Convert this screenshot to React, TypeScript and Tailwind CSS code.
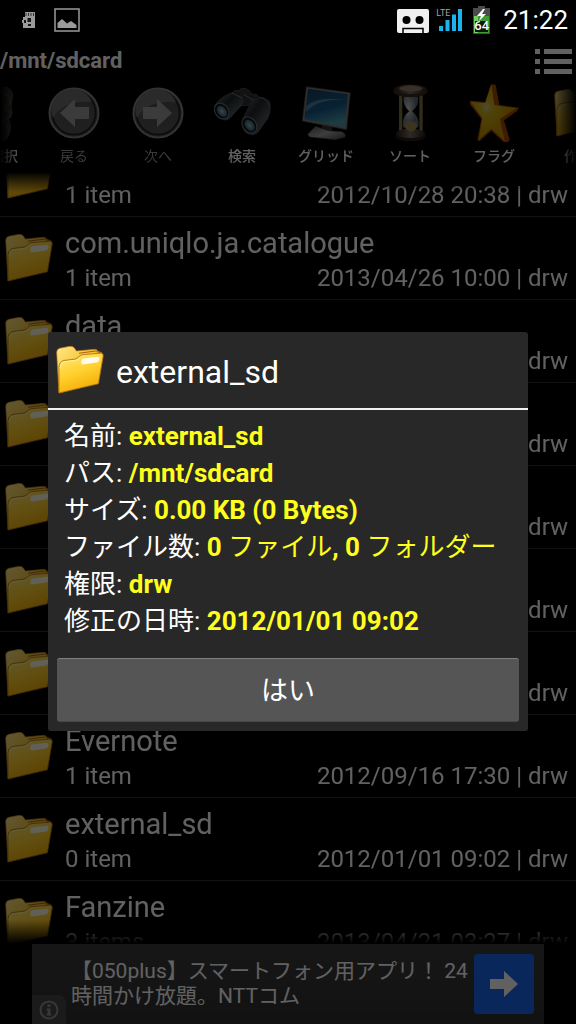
import React from "react";

type Entry = { name?: string; count?: string; date?: string };

const entries: Entry[] = [
  { count: "1 item", date: "2012/10/28 20:38" },
  { name: "com.uniqlo.ja.catalogue", count: "1 item", date: "2013/04/26 10:00" },
  { name: "data" },
  {},
  {},
  {},
  {},
  { name: "Evernote", count: "1 item", date: "2012/09/16 17:30" },
  { name: "external_sd", count: "0 item", date: "2012/01/01 09:02" },
  { name: "Fanzine", count: "3 items", date: "2013/04/21 03:27" },
];

function Folder({ className = "" }: { className?: string }) {
  const id = React.useId();
  return (
    <svg viewBox="0 0 146 146" className={className} aria-hidden="true">
      <defs>
        <linearGradient id={id + "b"} x1="0" y1="0" x2="1" y2="1">
          <stop offset="0" stopColor="#ffe98a" />
          <stop offset="0.5" stopColor="#f5c02a" />
          <stop offset="1" stopColor="#c98205" />
        </linearGradient>
        <linearGradient id={id + "f"} x1="0.2" y1="0" x2="0.6" y2="1">
          <stop offset="0" stopColor="#ffe873" />
          <stop offset="0.5" stopColor="#ffcf2c" />
          <stop offset="1" stopColor="#f2a900" />
        </linearGradient>
      </defs>
      <path d="M2 18Q3 9 11 7L42 1Q52 0 56 6L62 15L118 10Q125 10 127 16L138 20Q145 24 143 31L128 112L9 143Z" fill={`url(#${id}b)`} stroke="#b5761a" strokeWidth="2" />
      <path d="M70 22L122 15L128 19L136 21" fill="none" stroke="#a8610f" strokeWidth="3" />
      <path d="M9 66Q9 48 24 44L58 40Q65 38 70 32Q75 27 82 26L134 22Q145 22 143 33L129 115L9 143Z" fill={`url(#${id}f)`} stroke="#a96b10" strokeWidth="2.5" />
      <path d="M13 68Q13 52 27 48L60 44Q68 42 74 35" fill="none" stroke="#fff0a0" strokeWidth="3" />
      <path d="M82 38L126 33Q134 33 132 41Q130 49 124 50L82 56Q76 56 77 48Q77 39 82 38Z" fill="#fffbe8" />
    </svg>
  );
}

function RoundArrow({ flip = false }: { flip?: boolean }) {
  const id = React.useId();
  return (
    <svg viewBox="0 0 52 52" className="h-13 w-13" aria-hidden="true">
      <defs>
        <linearGradient id={id} x1="0" y1="0" x2="0" y2="1">
          <stop offset="0" stopColor="#626262" />
          <stop offset="1" stopColor="#6a6a6a" />
        </linearGradient>
      </defs>
      <circle cx="26" cy="26" r="24.5" fill="#555" stroke="#a8a8a8" strokeWidth="2" />
      <circle cx="26" cy="26" r="21.5" fill={`url(#${id})`} stroke="#252525" strokeWidth="1.5" />
      <path d="M5 31A21 21 0 0 1 44 15Q15 13 5 31Z" fill="#8c8c8c" />
      <path
        d="M12 26L27 12V20H41V32H27V40Z"
        fill="#c4c4c4"
        transform={flip ? "translate(52 0) scale(-1 1)" : undefined}
      />
    </svg>
  );
}

function Binoculars() {
  return (
    <svg viewBox="0 0 180 150" className="h-[50px] w-[60px]" aria-hidden="true">
      <defs>
        <linearGradient id="barrel" x1="0" y1="0" x2="1" y2="1">
          <stop offset="0" stopColor="#7d858b" />
          <stop offset="0.4" stopColor="#2b3035" />
          <stop offset="0.7" stopColor="#626a70" />
          <stop offset="1" stopColor="#15181b" />
        </linearGradient>
        <radialGradient id="lens">
          <stop offset="0" stopColor="#b9e5f5" />
          <stop offset="1" stopColor="#3f7690" />
        </radialGradient>
      </defs>
      <path d="M58 16Q70 3 82 8L86 2Q102-2 112 8L119 18L135 20Q142 27 137 34L108 52L74 55Z" fill="#373d42" stroke="#687077" strokeWidth="2" />
      <path d="M7 51Q25 26 54 14L84 20Q101 35 91 50L52 94Q38 102 19 90Q3 76 7 51Z" fill="url(#barrel)" />
      <path d="M92 90L119 37Q150 16 173 39Q181 63 169 91L140 132Q123 149 99 134Q85 119 92 90Z" fill="url(#barrel)" />
      <path d="M58 15L90 29M95 20L124 36M142 27Q164 31 173 54" fill="none" stroke="#858e94" strokeWidth="3" />
      <ellipse cx="29" cy="69" rx="20" ry="25" transform="rotate(-38 29 69)" fill="#171b1e" stroke="#8a949a" strokeWidth="3" />
      <ellipse cx="30" cy="70" rx="13" ry="19" transform="rotate(-38 30 70)" fill="url(#lens)" />
      <ellipse cx="112" cy="111" rx="20" ry="26" transform="rotate(-38 112 111)" fill="#171b1e" stroke="#8a949a" strokeWidth="3" />
      <ellipse cx="113" cy="112" rx="13" ry="19" transform="rotate(-38 113 112)" fill="url(#lens)" />
    </svg>
  );
}

function Monitor() {
  return (
    <svg viewBox="0 0 150 165" className="h-[55px] w-[50px]" aria-hidden="true">
      <defs>
        <linearGradient id="screen" x1="0" y1="0" x2="0.3" y2="1">
          <stop offset="0" stopColor="#1b5080" />
          <stop offset="0.6" stopColor="#1b6ea5" />
          <stop offset="1" stopColor="#62c4de" />
        </linearGradient>
        <linearGradient id="stand" x1="0" y1="0" x2="1" y2="1">
          <stop offset="0" stopColor="#666" />
          <stop offset="0.5" stopColor="#ccc" />
          <stop offset="1" stopColor="#555" />
        </linearGradient>
      </defs>
      <path d="M62 115L94 122L92 137L64 132Z" fill="#444" />
      <path d="M20 146Q26 137 44 121L83 134L123 137Q137 144 132 154L103 161L26 153Z" fill="url(#stand)" stroke="#444" strokeWidth="2" />
      <path d="M16 2L148 20L137 131L4 105Z" fill="#9b9d98" stroke="#555" strokeWidth="2" />
      <path d="M21 8L141 25L131 124L10 100Z" fill="url(#screen)" />
      <path d="M15 61Q50 28 138 43Q62 34 14 77Z" fill="#5f9fc6" />
    </svg>
  );
}

function Hourglass() {
  return (
    <svg viewBox="0 0 106 176" className="h-[58px] w-[35px]" aria-hidden="true">
      <defs>
        <linearGradient id="wood" x1="0" y1="0" x2="1" y2="0">
          <stop offset="0" stopColor="#392417" />
          <stop offset="0.5" stopColor="#9b897c" />
          <stop offset="1" stopColor="#38251c" />
        </linearGradient>
        <radialGradient id="glass" cx="0.35" cy="0.35">
          <stop offset="0" stopColor="#fff" />
          <stop offset="1" stopColor="#758994" />
        </radialGradient>
      </defs>
      <path d="M18 25H28V155H18Z M80 25H90V155H80Z" fill="#a6925c" />
      <ellipse cx="53" cy="158" rx="46" ry="16" fill="#342219" />
      <ellipse cx="53" cy="150" rx="44" ry="14" fill="url(#wood)" />
      <path d="M32 39H76Q79 67 58 83Q81 100 77 130Q54 152 30 130Q27 98 49 83Q29 65 32 39Z" fill="url(#glass)" />
      <path d="M34 121Q53 105 74 121Q70 143 54 144Q38 142 34 121Z" fill="#c9aa67" />
      <ellipse cx="53" cy="22" rx="52" ry="18" fill="#4b352a" />
      <ellipse cx="53" cy="16" rx="50" ry="14" fill="url(#wood)" />
      <ellipse cx="54" cy="14" rx="35" ry="8" fill="#b5a08a" />
    </svg>
  );
}

function Star() {
  return (
    <svg viewBox="0 0 150 180" className="h-[60px] w-[50px]" aria-hidden="true">
      <defs>
        <radialGradient id="gold" cx="0.35" cy="0.4">
          <stop offset="0" stopColor="#fff6b0" />
          <stop offset="0.25" stopColor="#ffdf23" />
          <stop offset="1" stopColor="#f5b400" />
        </radialGradient>
      </defs>
      <path d="M66 4L80 5L91 66L150 74L144 84L105 112L122 170L116 178L104 177L67 143L31 175L25 171L37 108L2 63L4 53L48 57Z" fill="#c95d05" />
      <path d="M67 4L76 66L141 76L93 108L107 174L67 137L29 170L40 105L4 56L49 60Z" fill="url(#gold)" />
    </svg>
  );
}

function Figure() {
  return (
    <svg viewBox="0 0 45 60" className="h-[60px] w-[45px]" aria-hidden="true">
      <path d="M20 4H40Q48 10 44 18V25Q46 32 41 36Q46 45 38 58H17Z" fill="#6e665b" />
      <path d="M32 10Q45 13 42 20L32 28Q45 23 42 34L30 41Q43 40 40 53" fill="none" stroke="#8c8475" strokeWidth="2" />
    </svg>
  );
}

const tools: { label: string; icon: React.ReactNode; faded?: boolean }[] = [
  { label: "複数選択", icon: <Figure /> },
  { label: "戻る", icon: <RoundArrow />, faded: true },
  { label: "次へ", icon: <RoundArrow flip />, faded: true },
  { label: "検索", icon: <Binoculars /> },
  { label: "グリッド", icon: <Monitor /> },
  { label: "ソート", icon: <Hourglass /> },
  { label: "フラグ", icon: <Star /> },
  { label: "作成", icon: <Folder className="h-12 w-12" /> },
];

function StatusBar() {
  return (
    <header className="flex h-[38px] shrink-0 items-center pl-[22px] pr-2 pt-[2px]">
      <svg viewBox="0 0 14 18" className="h-[18px] w-[14px]" aria-hidden="true">
        <path d="M3 1H13V17H1V12H0V9H1V6H3Z" fill="#9a9a9a" />
        <path d="M4 2V5M6.5 2V5M9 2V5M11.5 2V5" stroke="#333" />
        <path d="M5.500 7H9V11H5.500ZM6 13H9V15H6ZM2 9H4V12H2Z" fill="#161616" />
      </svg>
      <svg viewBox="0 0 26 24" className="ml-[18px] h-6 w-[26px]" aria-hidden="true">
        <rect x="1" y="1" width="24" height="22" fill="none" stroke="#9a9a9a" strokeWidth="1.5" />
        <path d="M3.5 20V15L8 11L13 15.5L17 13L22.500 17V20Z" fill="#9a9a9a" />
      </svg>
      <div className="ml-auto flex items-center">
        <svg viewBox="0 0 32 24" className="mt-0.5 h-6 w-8" aria-hidden="true">
          <rect width="32" height="24" rx="2" fill="#f0f0f0" />
          <circle cx="9.500" cy="11" r="4" fill="#000" />
          <circle cx="22.500" cy="11" r="4" fill="#000" />
          <path d="M6 24V19.500H26V24" fill="none" stroke="#000" strokeWidth="1.5" />
        </svg>
        <div className="relative ml-[7px] h-6 w-7">
          <svg viewBox="0 0 28 24" className="h-6 w-7" aria-hidden="true">
            <path d="M3 18H7V23H3ZM9.500 12H13.500V23H9.500ZM16 6.500H20V23H16ZM22 1H26V23H22Z" fill="#19b4ec" />
          </svg>
          <span className="absolute left-0 top-0 text-[9px] leading-[10px] text-[#a0a0a0]">LTE</span>
        </div>
        <div className="relative ml-2 h-7 w-[19px]">
          <svg viewBox="0 0 19 28" className="h-7 w-[19px]" aria-hidden="true">
            <path d="M6 0H13V2H18V28H1V2H6Z" fill="#4b4b4b" />
            <path d="M2 10H17V27H2Z" fill="#3c9b32" />
            <path d="M2 10H6V27H2Z" fill="#77cf62" />
            <path d="M11 3L5 10H9L7 15L14 8H10L13 3Z" fill="#fff" />
            <path d="M3 15H16V26H3Z" fill="#0b160a" />
          </svg>
          <span className="absolute inset-x-0 bottom-[2px] text-center text-[13px] font-medium leading-3 text-white">64</span>
        </div>
        <time className="ml-3 text-[26px] leading-8 text-white">21:22</time>
      </div>
    </header>
  );
}

function Toolbar() {
  return (
    <nav className="h-[92px] shrink-0 overflow-hidden [mask-image:linear-gradient(to_right,transparent,black_20px,black_calc(100%-20px),transparent)]">
      <div className="-ml-[52px] flex">
        {tools.map((t) => (
          <button key={t.label} className="flex w-[84px] shrink-0 flex-col items-center">
            <span className="flex h-[66px] items-center opacity-80">{t.icon}</span>
            <span className={`text-[14px] leading-5 ${t.faded ? "text-[#999]" : "font-medium text-white"}`}>{t.label}</span>
          </button>
        ))}
      </div>
    </nav>
  );
}

function Row({ name, count, date }: Entry) {
  return (
    <li className="flex h-[83px] items-center border-b border-[#303030] pl-[5px] pr-2">
      <Folder className="h-12 w-12 shrink-0" />
      <div className="ml-3 flex-1 pt-1">
        <div className="h-9 text-[29px] leading-[35px]">{name}</div>
        <div className="flex h-8 text-[24px] leading-8">
          <span>{count}</span>
          <span className="ml-auto">{date ? `${date} | drw` : "drw"}</span>
        </div>
      </div>
    </li>
  );
}

function Ad() {
  return (
    <aside className="relative mx-8 flex h-20 shrink-0 items-center justify-between bg-linear-to-b from-[#3c3c3c] to-[#303030] pl-[39px] pr-[10px] text-[21px] leading-[25px]">
      <p className="whitespace-nowrap">
        【050plus】スマートフォン用アプリ！ 24
        <br />
        時間かけ放題。NTTコム
      </p>
      <a href="#open" aria-label="開く" className="flex h-[60px] w-[60px] shrink-0 items-center justify-center rounded-sm bg-[#1968f0]">
        <svg viewBox="0 0 28 26" className="h-[26px] w-7" aria-hidden="true">
          <path d="M0 8H14V0L28 13L14 26V18H0Z" fill="#fff" />
        </svg>
      </a>
      <span className="absolute bottom-0 left-0 flex h-[29px] w-[34px] items-center justify-center rounded-tr-lg bg-[#484848]">
        <svg viewBox="0 0 20 20" className="h-5 w-5" aria-hidden="true">
          <circle cx="10" cy="10" r="8.500" fill="none" stroke="#909090" strokeWidth="2" />
          <path d="M8.500 4.500H11.500V7H8.500ZM7.500 8.500H11.500V14H12.500V15.500H7.500V14H8.500V10H7.500Z" fill="#909090" />
        </svg>
      </span>
    </aside>
  );
}

const details: { label: string; value: React.ReactNode }[] = [
  { label: "名前", value: "external_sd" },
  { label: "パス", value: "/mnt/sdcard" },
  { label: "サイズ", value: "0.00 KB (0 Bytes)" },
  {
    label: "ファイル数",
    value: (
      <>
        0 <span className="font-normal">ファイル</span>, 0 <span className="font-normal">フォルダー</span>
      </>
    ),
  },
  { label: "権限", value: "drw" },
  { label: "修正の日時", value: "2012/01/01 09:02" },
];

function DetailsDialog() {
  return (
    <section role="dialog" aria-labelledby="dialog-title" className="w-full rounded-[3px] bg-[#282828] text-white">
      <div className="flex h-[76px] items-center pl-2">
        <Folder className="h-12 w-12" />
        <h1 id="dialog-title" className="ml-3 pt-1 text-[32px] leading-10">external_sd</h1>
      </div>
      <div className="h-[2px] bg-[#f0f0f0]" />
      <dl className="px-4 pb-[18px] pt-2 text-[26px] leading-[37px]">
        {details.map((d) => (
          <div key={d.label} className="flex h-[37px] whitespace-pre">
            <dt>{d.label}: </dt>
            <dd className="font-bold text-[#ffff1e]">{d.value}</dd>
          </div>
        ))}
      </dl>
      <div className="px-[9px] pb-[9px]">
        <button className="h-16 w-full rounded-[3px] border-b border-t border-b-[#484848] border-t-[#808080] bg-[#555] pt-1 text-[27px]">はい</button>
      </div>
    </section>
  );
}

export default function App() {
  return (
    <div className="flex h-screen flex-col overflow-hidden bg-black font-['Roboto','Noto_Sans_CJK_JP',sans-serif]">
      <StatusBar />
      <div className="relative flex min-h-0 flex-1 flex-col text-white">
        <div className="flex h-[42px] shrink-0 items-center justify-between pr-1 pt-1">
          <div className="text-[22px] font-bold leading-8">/mnt/sdcard</div>
          <button aria-label="メニュー">
            <svg viewBox="0 0 37 25" className="h-[25px] w-[37px]" aria-hidden="true">
              <path d="M0 0H5V5H0ZM9 0H37V5H9ZM0 10H5V15H0ZM9 10H37V15H9ZM0 20H5V25H0ZM9 20H37V25H9Z" fill="#fff" />
            </svg>
          </button>
        </div>
        <Toolbar />
        <main className="min-h-0 flex-1 overflow-hidden [mask-image:linear-gradient(to_bottom,transparent,black_20px,black_calc(100%-24px),transparent)]">
          <ul className="-mt-[38px]">
            {entries.map((e, i) => (
              <Row key={i} {...e} />
            ))}
          </ul>
        </main>
        <Ad />
        <div className="absolute inset-0 flex items-center bg-black/62 px-12">
          <DetailsDialog />
        </div>
      </div>
    </div>
  );
}
